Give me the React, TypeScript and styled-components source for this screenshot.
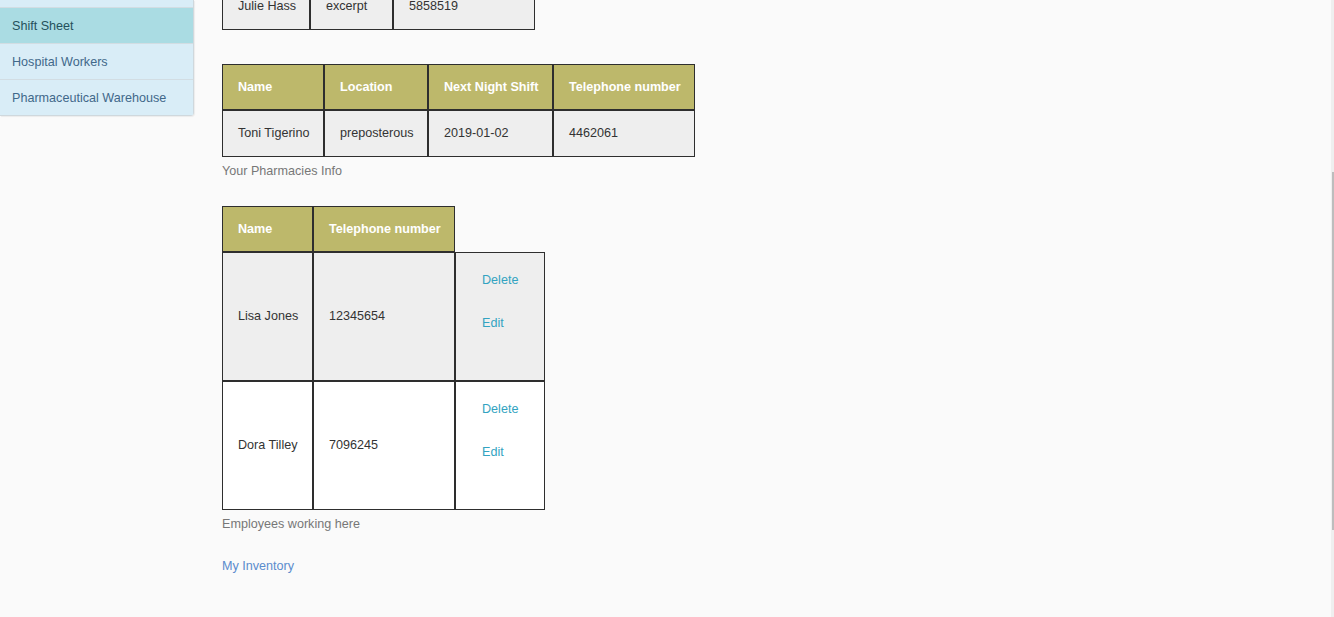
import React from "react";
import styled, { createGlobalStyle } from "styled-components";

const Global = createGlobalStyle`
  html, body { margin: 0; padding: 0; background: #fafafa; }
  body { font-family: "Liberation Sans", Arial, sans-serif; font-size: 12.6px; color: #333; overflow: hidden; }
  #root { min-height: 617px; }
`;

const Layout = styled.div`
  display: flex;
  align-items: flex-start;
  gap: 28px;
  height: 617px;
  overflow: hidden;
`;

const Sidebar = styled.nav`
  width: 193px;
  flex: none;
  display: flex;
  flex-direction: column;
  padding-top: 7px;
  background: #d9edf7;
  border-right: 1px solid #cfd8dd;
  border-bottom: 1px solid #cfd8dd;
  border-bottom-right-radius: 4px;
  box-shadow: 1px 1px 1px rgba(0, 0, 0, 0.06);
`;

const NavItem = styled.a<{ $active?: boolean }>`
  display: flex;
  align-items: center;
  height: 35px;
  padding: 0 12px;
  font-size: 12.6px;
  text-decoration: none;
  white-space: nowrap;
  border-top: 1px solid #d2dde3;
  color: ${(p) => (p.$active ? "#25515c" : "#41688a")};
  background: ${(p) => (p.$active ? "#aadce3" : "#d9edf7")};
`;

const Main = styled.main`
  display: flex;
  flex-direction: column;
  align-items: flex-start;
  margin-top: -17px;
`;

const Table = styled.table<{ $gap: number }>`
  border-collapse: separate;
  border-spacing: 0;
  table-layout: fixed;
  margin-bottom: ${(p) => p.$gap}px;
`;

const Caption = styled.caption`
  caption-side: bottom;
  text-align: left;
  color: #777;
  font-size: 12.6px;
  line-height: 18px;
  padding-top: 5px;
  white-space: nowrap;
`;

const Th = styled.th`
  box-sizing: border-box;
  background: #bdb86b;
  color: #fff;
  font-weight: bold;
  text-align: left;
  font-size: 12.6px;
  line-height: 16px;
  padding: 14px 0 14px 15px;
  white-space: nowrap;
  border: 1px solid #2e2e2e;
`;

const Col = styled.col<{ $w: number }>`
  width: ${(p) => p.$w}px;
`;

const Tr = styled.tr<{ $white?: boolean }>`
  background: ${(p) => (p.$white ? "#ffffff" : "#eeeeee")};
`;

const Td = styled.td`
  box-sizing: border-box;
  text-align: left;
  font-size: 12.6px;
  line-height: 16px;
  padding: 14px 0 15px 15px;
  white-space: nowrap;
  border: 1px solid #2e2e2e;
  vertical-align: middle;
  color: #333;
`;

const ActionCell = styled.td`
  box-sizing: border-box;
  vertical-align: top;
  padding: 18px 0 48px 26px;
  border: 1px solid #2e2e2e;
`;

const Actions = styled.div`
  display: flex;
  flex-direction: column;
  align-items: flex-start;
  gap: 25px;
`;

const ActionLink = styled.a`
  color: #33a3c1;
  font-size: 12.6px;
  line-height: 18px;
  text-decoration: none;
`;

const EmptyTh = styled.th`
  background: transparent;
  border: none;
  padding: 0;
`;

const InventoryLink = styled.a`
  color: #5b8ccd;
  font-size: 12.6px;
  line-height: 18px;
  text-decoration: none;
  margin-top: 24px;
`;

const Scrollbar = styled.div`
  position: fixed;
  top: 0;
  right: 0;
  width: 3px;
  height: 617px;
  background: #efefef;
`;

const Thumb = styled.div`
  position: absolute;
  left: 1px;
  top: 172px;
  width: 2px;
  height: 358px;
  background: #bdbdbd;
`;

const employees = [
  { name: "Lisa Jones", phone: "12345654", white: false },
  { name: "Dora Tilley", phone: "7096245", white: true },
];

export default function App() {
  return (
    <>
      <Global />
      <Layout>
        <Sidebar>
          <NavItem href="#" $active>Shift Sheet</NavItem>
          <NavItem href="#">Hospital Workers</NavItem>
          <NavItem href="#">Pharmaceutical Warehouse</NavItem>
        </Sidebar>
        <Main>
          <Table $gap={34}>
            <colgroup>
              <Col $w={88} />
              <Col $w={83} />
              <Col $w={142} />
            </colgroup>
            <tbody>
              <Tr>
                <Td>Julie Hass</Td>
                <Td>excerpt</Td>
                <Td>5858519</Td>
              </Tr>
            </tbody>
          </Table>

          <Table $gap={26}>
            <Caption>Your Pharmacies Info</Caption>
            <colgroup>
              <Col $w={102} />
              <Col $w={104} />
              <Col $w={125} />
              <Col $w={142} />
            </colgroup>
            <thead>
              <tr>
                <Th>Name</Th>
                <Th>Location</Th>
                <Th>Next Night Shift</Th>
                <Th>Telephone number</Th>
              </tr>
            </thead>
            <tbody>
              <Tr>
                <Td>Toni Tigerino</Td>
                <Td>preposterous</Td>
                <Td>2019-01-02</Td>
                <Td>4462061</Td>
              </Tr>
            </tbody>
          </Table>

          <Table $gap={0}>
            <Caption>Employees working here</Caption>
            <colgroup>
              <Col $w={91} />
              <Col $w={142} />
              <Col $w={90} />
            </colgroup>
            <thead>
              <tr>
                <Th>Name</Th>
                <Th>Telephone number</Th>
                <EmptyTh />
              </tr>
            </thead>
            <tbody>
              {employees.map((e) => (
                <Tr key={e.name} $white={e.white}>
                  <Td>{e.name}</Td>
                  <Td>{e.phone}</Td>
                  <ActionCell>
                    <Actions>
                      <ActionLink href="#">Delete</ActionLink>
                      <ActionLink href="#">Edit</ActionLink>
                    </Actions>
                  </ActionCell>
                </Tr>
              ))}
            </tbody>
          </Table>

          <InventoryLink href="#">My Inventory</InventoryLink>
        </Main>
      </Layout>
      <Scrollbar>
        <Thumb />
      </Scrollbar>
    </>
  );
}
